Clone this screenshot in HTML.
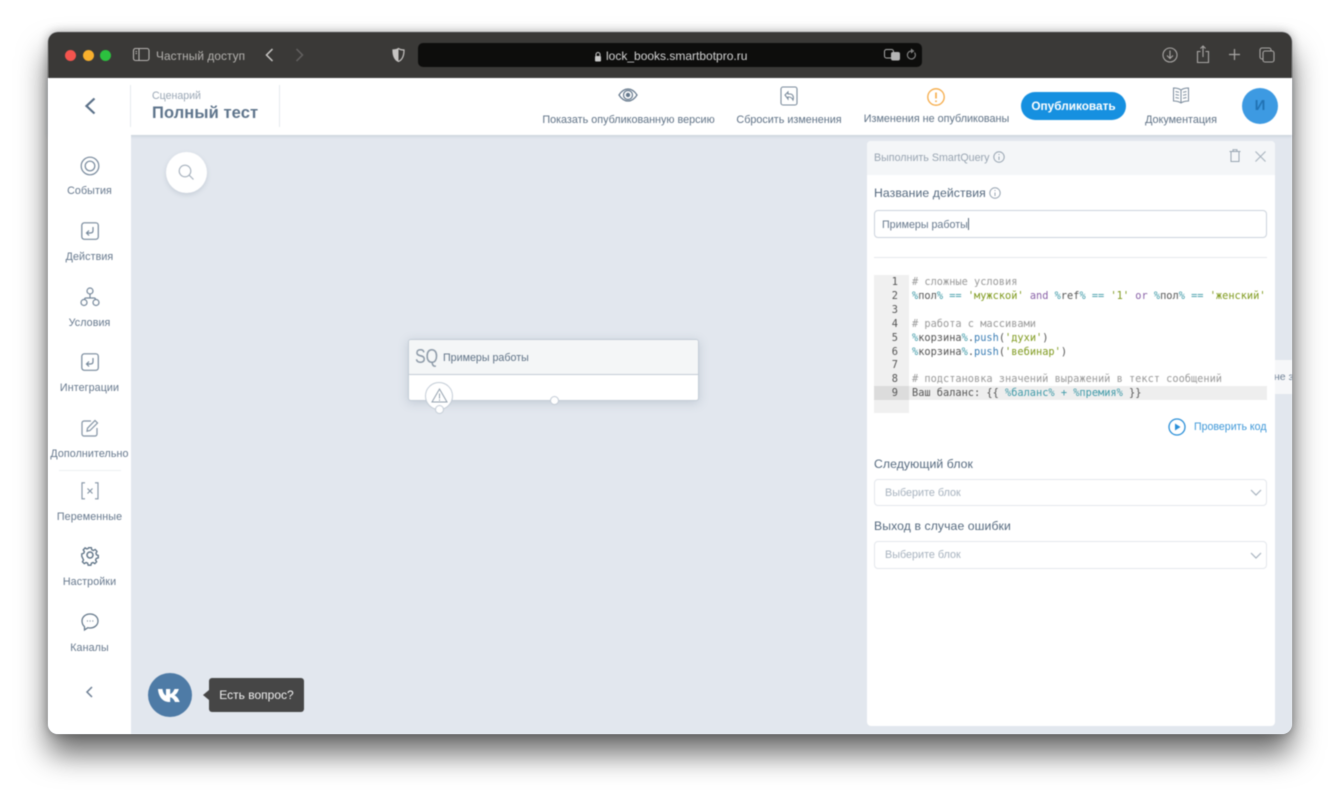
<!DOCTYPE html>
<html lang="ru"><head><meta charset="utf-8"><title>Полный тест</title>
<style>
html,body{margin:0;padding:0;width:1340px;height:797px;overflow:hidden;background:#fff}
body{font-family:"Liberation Sans","Noto Sans CJK SC",sans-serif;position:relative}
#win{position:absolute;left:48px;top:32px;width:1244px;height:702px;border-radius:10px;box-shadow:0 20px 30px rgba(0,0,0,.58),0 0 10px rgba(0,0,0,.3);background:#e2e7ee}
#in{position:absolute;left:0;top:0;width:1340px;height:797px;filter:blur(.45px)}
#clip{position:absolute;left:48px;top:32px;width:1244px;height:702px;border-radius:10px;overflow:hidden;background:#e2e7ee}
.a{position:absolute;white-space:nowrap}
.nav{color:#66788d;font-size:10.7px;line-height:14px;transform:translateX(-50%);letter-spacing:.1px}
.top{color:#5f7286;font-size:10.8px;line-height:14px;transform:translateX(-50%)}
svg{position:absolute;overflow:visible;fill:none}
.lb{color:#566a7f;font-size:12.2px;line-height:16px;letter-spacing:.1px}
.field{position:absolute;left:874px;width:393px;background:#fff;border-radius:4px;box-sizing:border-box}
#code{font-family:"DejaVu Sans Mono","Liberation Mono",monospace;font-size:10.3px;line-height:13.9px;color:#555;left:912px;top:276px;white-space:pre;position:absolute}
#nums{font-family:"DejaVu Sans Mono",monospace;font-size:10.3px;line-height:13.9px;color:#555;position:absolute;left:874px;top:276px;width:24px;text-align:right;white-space:pre}
.t{color:#3f9aa8}.s{color:#7f9a1e}.k{color:#8a62a8}.m{color:#9a9a9a}.f{color:#3d7fb5}
</style></head><body>
<div id="win"></div>
<div id="in">
<div id="clip"></div>
<!-- toolbar -->
<div class="a" style="left:48px;top:32px;width:1244px;height:46px;background:#3a3937;border-radius:10px 10px 0 0"></div>
<div class="a" style="left:65px;top:50px;width:11px;height:11px;border-radius:50%;background:#f4544e"></div>
<div class="a" style="left:83px;top:50px;width:11px;height:11px;border-radius:50%;background:#f8b02d"></div>
<div class="a" style="left:100px;top:50px;width:11px;height:11px;border-radius:50%;background:#2cc13f"></div>
<svg style="left:133px;top:48px" width="16" height="14" stroke="#b5b3b0" stroke-width="1.1"><rect x=".5" y=".5" width="15.5" height="12" rx="2"/><path d="M6 .5v12M2.500 3.500h1.500M2.500 5.500h1.500"/></svg>
<div class="a" style="left:156px;top:49px;color:#b4b2af;font-size:11.8px;line-height:14px;letter-spacing:.1px">Частный доступ</div>
<svg style="left:265px;top:48px" width="10" height="14" stroke="#c9c7c5" stroke-width="1.5"><path d="M7.500 1L1.500 7l6 6"/></svg>
<svg style="left:295px;top:48px" width="10" height="14" stroke="#626160" stroke-width="1.5"><path d="M1.500 1l6 6-6 6"/></svg>
<svg style="left:392px;top:48px" width="13" height="14"><path d="M6.500.5C5 1.600 3 2 1 2c0 5 1 9.500 5.500 11.500C11 11.500 12 7 12 2c-2 0-4-.4-5.500-1.500z" fill="#3a3937" stroke="#c6c4c2" stroke-width="1.2"/><path d="M6.500.5C5 1.600 3 2 1 2c0 5 1 9.500 5.500 11.500z" fill="#c6c4c2"/></svg>
<div class="a" style="left:418px;top:43px;width:504px;height:24px;background:#0d0d0c;border-radius:5px"></div>
<svg style="left:594px;top:51px" width="8" height="11"><path d="M2 5V3.500a2 2 0 014 0V5" stroke="#c9c9c9" stroke-width="1"/><rect x="1" y="5" width="6" height="5.500" rx="1" fill="#c9c9c9"/></svg>
<div class="a" style="left:606px;top:49px;color:#d2d2d2;font-size:12px;line-height:14px">lock_books.smartbotpro.ru</div>
<svg style="left:884px;top:49px" width="17" height="13"><rect x=".5" y=".5" width="9" height="8.500" rx="2" stroke="#aaa"/><rect x="7" y="3" width="9" height="8.500" rx="2" fill="#b5b5b5"/></svg>
<svg style="left:906px;top:49px" width="11" height="13" stroke="#8d8d8d"><path d="M8.500 3.500a4 4 0 11-3-1.500M5.500.5v3l2-1.500z"/></svg>
<svg style="left:1162px;top:47px" width="16" height="16" stroke="#a8a6a4" stroke-width="1.1"><circle cx="8" cy="8" r="7"/><path d="M8 3.500v8M5 8.500l3 3 3-3"/></svg>
<svg style="left:1196px;top:45px" width="14" height="18" stroke="#a8a6a4" stroke-width="1.1"><path d="M4.500 6.500H1.500v11h11v-11h-3M7 12V1M4.500 3.500L7 1l2.500 2.500"/></svg>
<svg style="left:1228px;top:48px" width="13" height="13" stroke="#a8a6a4" stroke-width="1.200"><path d="M6.500 1v11M1 6.500h11"/></svg>
<svg style="left:1259px;top:47px" width="16" height="16" stroke="#a8a6a4" stroke-width="1.100"><rect x="4" y="4" width="11" height="11" rx="2"/><path d="M4 12H3a2 2 0 01-2-2V3a2 2 0 012-2h7a2 2 0 012 2v1"/></svg>

<!-- header -->
<div class="a" style="left:48px;top:78px;width:1244px;height:57px;background:#fff;box-shadow:0 1px 3px rgba(120,135,155,.3)"></div>
<svg style="left:83px;top:97px" width="14" height="18" stroke="#5a7088" stroke-width="2.200"><path d="M11.500 1.500L3.500 9l8 7.500"/></svg>
<div class="a" style="left:130px;top:85px;width:1px;height:42px;background:#e6eaee"></div>
<div class="a" style="left:279px;top:85px;width:1px;height:42px;background:#e6eaee"></div>
<div class="a" style="left:152px;top:89px;color:#9aa7b5;font-size:10.6px;line-height:14px">Сценарий</div>
<div class="a" style="left:152px;top:103px;color:#5f758c;font-size:16.5px;line-height:20px;font-weight:700;letter-spacing:.1px">Полный тест</div>

<svg style="left:618px;top:87px" width="20" height="16" stroke="#65788c" stroke-width="1.200"><path d="M1 8c2.500-4 5.500-6 9-6s6.500 2 9 6c-2.500 4-5.500 6-9 6s-6.500-2-9-6z"/><circle cx="10" cy="8" r="4.500"/><circle cx="10" cy="8" r="2.200" fill="#65788c" stroke="none"/></svg>
<div class="a top" style="left:628.500px;top:113px">Показать опубликованную версию</div>
<svg style="left:780px;top:86px" width="18" height="20" stroke="#7b8b9c" stroke-width="1.100"><rect x="1" y="1" width="16" height="18" rx="2"/><path d="M5 9l3-3v2h2c3 0 4 3 3 6-1-2-2-3-4-3H8v2z"/></svg>
<div class="a top" style="left:789px;top:113px">Сбросить изменения</div>
<svg style="left:927px;top:88px" width="18" height="18" stroke="#f6ab47" stroke-width="1.300"><circle cx="9" cy="9" r="8.200"/><path d="M9 4.500v6M9 12.500v1.500" stroke-width="1.600"/></svg>
<div class="a top" style="left:936.500px;top:112px">Изменения не опубликованы</div>
<div class="a" style="left:1021px;top:92px;width:105px;height:28px;border-radius:14px;background:#1690e0;color:#fff;font-size:11.800px;font-weight:700;line-height:28px;text-align:center">Опубликовать</div>
<svg style="left:1172px;top:87px" width="18" height="17" stroke="#7b8b9c" stroke-width="1"><path d="M9 3C7 1.500 4 1 1.500 1v13c2.500 0 5.500.5 7.500 2 2-1.500 5-2 7.500-2V1C14 1 11 1.500 9 3zM9 3v13M3.500 4.500l3.500.8M3.500 7.500l3.500.8M3.500 10.500l3.500.8M14.500 4.500l-3.500.8M14.500 7.500l-3.500.8M14.500 10.500l-3.500.8"/></svg>
<div class="a top" style="left:1181px;top:113px">Документация</div>
<div class="a" style="left:1242px;top:88px;width:36px;height:36px;border-radius:50%;background:#3d9ae2;color:#2273b5;font-size:15px;font-weight:700;line-height:36px;text-align:center">И</div>

<!-- sidebar -->
<div class="a" style="left:48px;top:135px;width:83px;height:599px;background:#fff;border-radius:0 0 0 10px"></div>
<svg style="left:80px;top:156px" width="20" height="20" stroke="#76889b" stroke-width="1.200"><circle cx="10" cy="10" r="8.800"/><circle cx="10" cy="10" r="4.800"/></svg>
<div class="a nav" style="left:89.500px;top:184px">События</div>
<svg style="left:81px;top:222px" width="18" height="18" stroke="#76889b" stroke-width="1.200"><rect x=".8" y=".8" width="16.500" height="16.500" rx="2.500"/><path d="M12 5v3.500c0 1.500-1 2.500-2.500 2.500H6M8 8.500L5.500 11 8 13.500"/></svg>
<div class="a nav" style="left:89.500px;top:250px">Действия</div>
<svg style="left:80px;top:287px" width="20" height="20" stroke="#76889b" stroke-width="1.200"><circle cx="10" cy="4" r="3"/><circle cx="4" cy="15.500" r="3"/><circle cx="16" cy="15.500" r="3"/><path d="M10 7v4.500M4.500 12.500c0-1 .5-1.500 1.500-1.500h8c1 0 1.500.5 1.500 1.500"/></svg>
<div class="a nav" style="left:89.500px;top:316px">Условия</div>
<svg style="left:81px;top:353px" width="18" height="18" stroke="#76889b" stroke-width="1.200"><rect x=".8" y=".8" width="16.500" height="16.500" rx="2.500"/><path d="M12 5v3.500c0 1.500-1 2.500-2.500 2.500H6M8 8.500L5.500 11 8 13.500"/></svg>
<div class="a nav" style="left:89.500px;top:381px">Интеграции</div>
<svg style="left:81px;top:419px" width="18" height="18" stroke="#8393a4" stroke-width="1.200"><path d="M10 2H3a2 2 0 00-2 2v11a2 2 0 002 2h11a2 2 0 002-2V9"/><path d="M14 1.500l2.500 2.500L9 11.500l-3 .7.500-3z"/></svg>
<div class="a nav" style="left:89.500px;top:447px">Дополнительно</div>
<div class="a" style="left:59px;top:470px;width:62px;height:1px;background:#eceff2"></div>
<svg style="left:81px;top:482px" width="18" height="18" stroke="#8393a4" stroke-width="1.100"><path d="M4 .8H1v16h3M14 .8h3v16h-3M6.500 6.500l5 5M11.500 6.500l-5 5"/></svg>
<div class="a nav" style="left:89.500px;top:510px">Переменные</div>
<svg style="left:81px;top:546px" width="18" height="18" stroke="#627689" stroke-width="1.500"><circle cx="9" cy="9" r="3"/><path d="M7.500 1h3l.5 2.300 1.700.8 2-1.200 2 2.200-1.200 2 .6 1.700 2 .7v2.700l-2.200.6-.8 1.700 1.200 2-2 2-2-1.200-1.700.7-.6 2.200h-3l-.6-2.200-1.700-.7-2 1.200-2-2 1.200-2-.8-1.700L0 10.500V7.800l2.200-.7.600-1.700-1.200-2 2-2.200 2 1.200 1.700-.8z" transform="translate(.8 .8) scale(.91)"/></svg>
<div class="a nav" style="left:89.500px;top:575px">Настройки</div>
<svg style="left:81px;top:613px" width="18" height="18" stroke="#627689" stroke-width="1.200"><path d="M9 1c4.500 0 8 3 8 7s-3.500 7-8 7c-.8 0-1.500-.1-2.200-.3L3.500 17v-3.300C2 12.300 1 10.300 1 8c0-4 3.500-7 8-7z"/><path d="M6 8h.8M8.700 8h.8M11.400 8h.8" stroke-width="1.300"/></svg>
<div class="a nav" style="left:89.500px;top:641px">Каналы</div>
<svg style="left:85px;top:686px" width="9" height="12" stroke="#6d7f94" stroke-width="1.500"><path d="M7 1L2 6l5 5"/></svg>

<!-- canvas -->
<div class="a" style="left:166px;top:152px;width:41px;height:41px;border-radius:50%;background:#fff;box-shadow:0 2px 5px rgba(120,135,155,.25)"></div>
<svg style="left:178px;top:164px" width="17" height="17" stroke="#a6b1bd" stroke-width="1.100"><circle cx="7" cy="7" r="5.800"/><path d="M11.200 11.200l4.300 4.300"/></svg>

<!-- node -->
<div class="a" style="left:408px;top:339px;width:291px;height:62px;background:#fff;border:1px solid #c3ccd6;box-sizing:border-box;border-radius:3px;box-shadow:0 2px 10px rgba(120,135,155,.3)"></div>
<div class="a" style="left:409px;top:340px;width:289px;height:34px;background:#f4f6f7;border-bottom:1px solid #c3ccd6;border-radius:2px 2px 0 0"></div>
<div class="a" style="left:415px;top:345px;color:#8d9aa8;font-size:20px;line-height:24px;font-weight:400;transform:scaleX(.8);transform-origin:left">SQ</div>
<div class="a" style="left:443px;top:351px;color:#5f7286;font-size:10.700px;line-height:14px">Примеры работы</div>
<div class="a" style="left:425px;top:382px;width:28px;height:28px;border-radius:50%;background:#fff;border:1px solid #c3ccd6;box-sizing:border-box"></div>
<svg style="left:431px;top:388px" width="17" height="15" stroke="#95a2af" stroke-width="1"><path d="M8.500 1L16 14H1z"/><path d="M8.500 5.500v5M8.500 11.500v1.200"/></svg>
<div class="a" style="left:435px;top:405px;width:9px;height:9px;border-radius:50%;background:#fff;border:1px solid #c3ccd6;box-sizing:border-box"></div>
<div class="a" style="left:550px;top:396px;width:9px;height:9px;border-radius:50%;background:#fff;border:1px solid #c3ccd6;box-sizing:border-box"></div>

<!-- vk -->
<div class="a" style="left:148px;top:673px;width:44px;height:44px;border-radius:50%;background:#4e7ba6"></div>
<svg style="left:158px;top:688px" width="24" height="15"><path d="M0 1h4.500c.3 3.500 2 6 3.500 6.500V1h4.200v5c2-.5 3.500-3 4.300-5h4.300c-.7 3-2.800 5.500-4.300 6.300 1.700.8 4 3 5.200 6.700h-4.700c-1-2.500-2.800-4.500-4.800-4.800V14h-1C5 14 .5 9 0 1z" fill="#fff"/></svg>
<div class="a" style="left:209px;top:678px;width:95px;height:34px;background:#464646;border-radius:3px;color:#f0f0f0;font-size:12px;line-height:34px;text-align:center">Есть вопрос?</div>
<div class="a" style="left:203px;top:690px;width:0;height:0;border-top:5px solid transparent;border-bottom:5px solid transparent;border-right:6px solid #464646"></div>

<!-- hidden tab -->
<div class="a" style="left:1275px;top:360px;width:17px;height:34px;background:#f6f7f9;overflow:hidden"><span class="a" style="left:-1px;top:10px;color:#6d7f94;font-size:10.500px;line-height:14px">не за</span></div>

<!-- panel -->
<div class="a" style="left:867px;top:141px;width:408px;height:585px;background:#fff;border-radius:4px"></div>
<div class="a" style="left:867px;top:141px;width:408px;height:34px;background:#f4f6f8;border-radius:4px 4px 0 0"></div>
<div class="a" style="left:874px;top:151px;color:#98a4b1;font-size:10.700px;line-height:14px">Выполнить SmartQuery</div>
<svg style="left:993px;top:151px" width="12" height="12" stroke="#98a5b2"><circle cx="6" cy="6" r="5.200"/><path d="M6 5.500v3.500M6 3v1"/></svg>
<svg style="left:1229px;top:149px" width="12" height="13" stroke="#98a5b2" stroke-width="1"><path d="M.5 2.500h11M4 2.500V.8h4v1.700M2 2.500v10h8v-10"/></svg>
<svg style="left:1255px;top:151px" width="11" height="11" stroke="#a8b3be" stroke-width="1.100"><path d="M.5.500l10 10M10.500.500l-10 10"/></svg>

<div class="a lb" style="left:874px;top:185px">Название действия</div>
<svg style="left:989px;top:187px" width="12" height="12" stroke="#98a5b2"><circle cx="6" cy="6" r="5.200"/><path d="M6 5.500v3.500M6 3v1"/></svg>
<div class="field" style="top:210px;height:28px;border:1px solid #ccd3dc"></div>
<div class="a" style="left:882px;top:218px;color:#66788c;font-size:10.700px;line-height:14px">Примеры работы<span style="display:inline-block;width:1px;height:12px;background:#5a6a7a;vertical-align:-2px"></span></div>
<div class="a" style="left:874px;top:257px;width:393px;height:1px;background:#e5e9ed"></div>

<!-- code -->
<div class="a" style="left:874px;top:275px;width:35px;height:138px;background:#f0f0f0"></div>
<div class="a" style="left:874px;top:386px;width:35px;height:14px;background:#dcdcdc"></div>
<div class="a" style="left:909px;top:386px;width:358px;height:14px;background:#eeeeee"></div>
<div id="nums">1
2
3
4
5
6
7
8
9</div>
<div id="code"><span class="m"># сложные условия</span>
<span class="t">%</span>пол<span class="t">%</span> <span class="t">==</span> <span class="s">'мужской'</span> <span class="k">and</span> <span class="t">%</span>ref<span class="t">%</span> <span class="t">==</span> <span class="s">'1'</span> <span class="k">or</span> <span class="t">%</span>пол<span class="t">%</span> <span class="t">==</span> <span class="s">'женский'</span>

<span class="m"># работа с массивами</span>
<span class="t">%</span>корзина<span class="t">%</span>.<span class="f">push</span>(<span class="s">'духи'</span>)
<span class="t">%</span>корзина<span class="t">%</span>.<span class="f">push</span>(<span class="s">'вебинар'</span>)

<span class="m"># подстановка значений выражений в текст сообщений</span>
Ваш баланс: {{ <span class="t">%баланс%</span> <span class="t">+</span> <span class="t">%премия%</span> }}</div>

<svg style="left:1168px;top:418px" width="18" height="18" stroke="#2a8fd8" stroke-width="1.300"><circle cx="9" cy="9" r="8"/><path d="M7 5.500L12.500 9 7 12.500z" fill="#2a8fd8" stroke="none"/></svg>
<div class="a" style="left:1194px;top:420px;color:#3d97d8;font-size:10.600px;line-height:14px">Проверить код</div>

<div class="a lb" style="left:874px;top:456px">Следующий блок</div>
<div class="field" style="top:479px;height:27px;border:1px solid #e3e7ec"></div>
<div class="a" style="left:885px;top:486px;color:#a8b3bf;font-size:10.800px;line-height:14px">Выберите блок</div>
<svg style="left:1250px;top:489px" width="12" height="8" stroke="#a8b3bf" stroke-width="1.200"><path d="M1 1l5 5 5-5"/></svg>
<div class="a lb" style="left:874px;top:518px">Выход в случае ошибки</div>
<div class="field" style="top:541px;height:28px;border:1px solid #e3e7ec"></div>
<div class="a" style="left:885px;top:548px;color:#a8b3bf;font-size:10.800px;line-height:14px">Выберите блок</div>
<svg style="left:1250px;top:552px" width="12" height="8" stroke="#a8b3bf" stroke-width="1.200"><path d="M1 1l5 5 5-5"/></svg>
</div>
</body></html>
